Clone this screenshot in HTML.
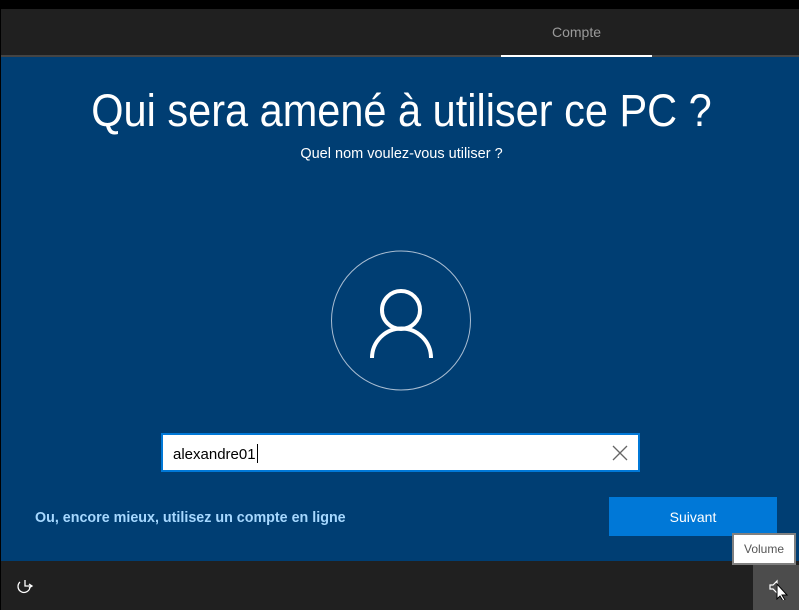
<!DOCTYPE html>
<html><head><meta charset="utf-8"><style>
html,body{margin:0;padding:0;width:799px;height:610px;overflow:hidden;background:#000;font-family:"Liberation Sans",sans-serif;}
.top{position:absolute;left:1px;top:9px;width:798px;height:46px;background:#202020;}
.tab{position:absolute;left:501px;width:151px;top:24px;text-align:center;color:#9a9a9a;font-size:14px;}
.line{position:absolute;left:1px;top:55px;width:798px;height:2px;background:#444;}
.uline{position:absolute;left:501px;top:55px;width:151px;height:2px;background:#fff;}
.main{position:absolute;left:1px;top:57px;width:798px;height:504px;background:#003e73;}
h1{position:absolute;top:84px;left:0;width:803px;margin:0;text-align:center;color:#fff;font-weight:300;font-size:41.5px;transform:scaleY(1.1);transform-origin:top;}
.sub{position:absolute;top:146px;left:0;width:803px;text-align:center;color:#fff;font-size:14.5px;}
.inp{position:absolute;left:161px;top:433px;width:475px;height:35px;border:2px solid #0078d7;background:#fff;}
.inp span{position:absolute;left:10px;top:9px;font-size:15px;color:#000;}
.cur{display:inline-block;width:1px;height:19px;background:#000;vertical-align:-4px;margin-left:1px;}
.link{position:absolute;left:35px;top:510px;color:#a6d8ff;font-size:14.3px;font-weight:bold;}
.btn{position:absolute;left:609px;top:497px;width:168px;height:39px;background:#0078d7;color:#fff;font-size:14px;text-align:center;line-height:41px;}
.bot{position:absolute;left:1px;top:561px;width:798px;height:49px;background:#202020;}
.vol{position:absolute;left:753px;top:565px;width:46px;height:45px;background:#4c4c4c;}
.tip{position:absolute;left:732px;top:533px;width:60px;height:28px;background:#fff;border:2px solid #808080;color:#555;font-size:12px;text-align:center;line-height:28px;}
</style></head><body>
<div class="top"></div>
<div class="tab">Compte</div>
<div class="line"></div><div class="uline"></div>
<div class="main"></div>
<h1>Qui sera amené à utiliser ce PC ?</h1>
<div class="sub">Quel nom voulez-vous utiliser ?</div>
<svg style="position:absolute;left:0;top:0" width="799" height="610">
<circle cx="401" cy="320.5" r="69.5" fill="none" stroke="#a9bdd2" stroke-width="1"/>
<circle cx="401" cy="310" r="19" fill="none" stroke="#fff" stroke-width="4"/>
<path d="M372 358 A29.5 29.5 0 0 1 431 358" fill="none" stroke="#fff" stroke-width="4"/>
</svg>
<div class="inp"><span>alexandre01<i class="cur"></i></span>
<svg style="position:absolute;left:449px;top:10px" width="16" height="16"><path d="M1 1L15 15M15 1L1 15" stroke="#666" stroke-width="1.3"/></svg></div>
<div class="link">Ou, encore mieux, utilisez un compte en ligne</div>
<div class="btn">Suivant</div>
<div class="bot"></div>
<svg style="position:absolute;left:16px;top:578px" width="18" height="16"><path d="M4 4 A6 6 0 1 0 14 9" fill="none" stroke="#fff" stroke-width="1.3"/><path d="M9 2V8H16M13 6L16 8L13 10" fill="none" stroke="#fff" stroke-width="1.3"/></svg>
<div class="vol"></div>
<svg style="position:absolute;left:768px;top:578px" width="22" height="22"><path d="M2 7H5L9 3V15L5 11H2Z" fill="none" stroke="#fff" stroke-width="1.2"/><path d="M9 6L9 21L12 18L15 23L17 22L14 17L19 17Z" fill="#fff" stroke="#000" stroke-width="1"/></svg>
<div class="tip">Volume</div>
</body></html>
